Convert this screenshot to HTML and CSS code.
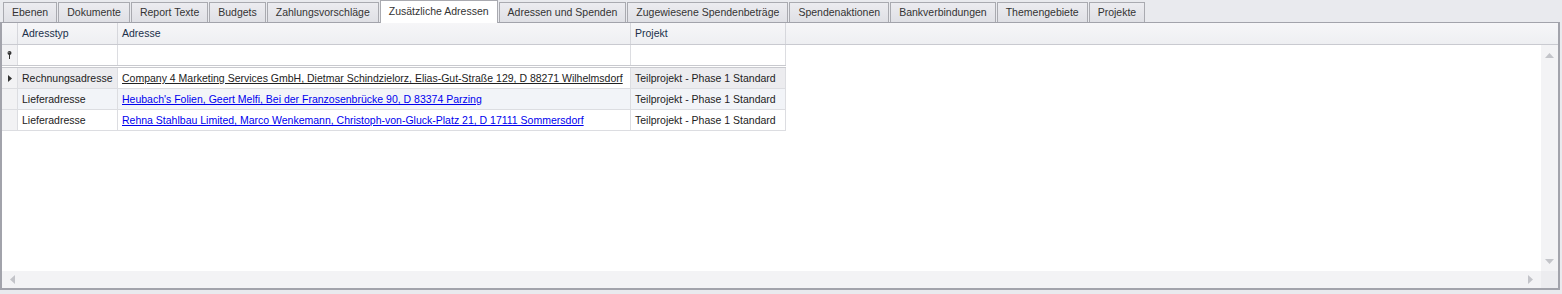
FILE: index.html
```html
<!DOCTYPE html>
<html lang="de">
<head>
<meta charset="utf-8">
<title>Zusätzliche Adressen</title>
<link rel="stylesheet" href="styles.css">
</head>
<body>
<div class="tabs">
  <div class="tab">Ebenen</div>
  <div class="tab">Dokumente</div>
  <div class="tab">Report Texte</div>
  <div class="tab">Budgets</div>
  <div class="tab">Zahlungsvorschläge</div>
  <div class="tab active">Zusätzliche Adressen</div>
  <div class="tab">Adressen und Spenden</div>
  <div class="tab">Zugewiesene Spendenbeträge</div>
  <div class="tab">Spendenaktionen</div>
  <div class="tab">Bankverbindungen</div>
  <div class="tab">Themengebiete</div>
  <div class="tab">Projekte</div>
</div>
<div class="panel">
  <div class="header">
    <div class="hc ind"></div>
    <div class="hc">Adresstyp</div>
    <div class="hc">Adresse</div>
    <div class="hc">Projekt</div>
  </div>
  <div class="body">
    <div class="gridarea">
      <div class="row filter">
        <div class="c ind"><svg width="5" height="8" viewBox="0 0 5 8"><circle cx="2.5" cy="2" r="2" fill="#333"/><rect x="2" y="3" width="1" height="5" fill="#333"/><rect x="1.5" y="1" width="1" height="1" fill="#999"/></svg></div>
        <div class="c"></div>
        <div class="c"></div>
        <div class="c"></div>
      </div>
      <div class="row focused">
        <div class="c ind"><svg width="4" height="7" viewBox="0 0 4 7"><path d="M0 0 L4 3.5 L0 7 Z" fill="#333"/></svg></div>
        <div class="c">Rechnungsadresse</div>
        <div class="c addr"><span class="link dark">Company 4 Marketing Services GmbH, Dietmar Schindzielorz, Elias-Gut-Straße 129, D 88271 Wilhelmsdorf</span></div>
        <div class="c">Teilprojekt - Phase 1 Standard</div>
      </div>
      <div class="row alt">
        <div class="c ind"></div>
        <div class="c">Lieferadresse</div>
        <div class="c"><span class="link">Heubach's Folien, Geert Melfi, Bei der Franzosenbrücke 90, D 83374 Parzing</span></div>
        <div class="c">Teilprojekt - Phase 1 Standard</div>
      </div>
      <div class="row">
        <div class="c ind"></div>
        <div class="c">Lieferadresse</div>
        <div class="c"><span class="link">Rehna Stahlbau Limited, Marco Wenkemann, Christoph-von-Gluck-Platz 21, D 17111 Sommersdorf</span></div>
        <div class="c">Teilprojekt - Phase 1 Standard</div>
      </div>
    </div>
    <div class="vscroll">
      <svg width="9" height="5" viewBox="0 0 9 5"><path d="M4.5 0 L9 5 L0 5 Z" fill="#c3c4c9"/></svg>
      <svg width="9" height="5" viewBox="0 0 9 5"><path d="M0 0 L9 0 L4.5 5 Z" fill="#c3c4c9"/></svg>
    </div>
  </div>
  <div class="hbar">
    <div class="hscroll">
      <svg width="5" height="9" viewBox="0 0 5 9"><path d="M5 0 L5 9 L0 4.5 Z" fill="#c3c4c9"/></svg>
      <svg width="5" height="9" viewBox="0 0 5 9"><path d="M0 0 L5 4.5 L0 9 Z" fill="#c3c4c9"/></svg>
    </div>
    <div class="corner"></div>
  </div>
</div>
</body>
</html>
```
FILE: styles.css
```css
html, body {
  margin: 0;
  padding: 0;
}
body {
  background: #e9eaee;
  font-family: "Liberation Sans", Arial, sans-serif;
  font-size: 10.5px;
  color: #222;
  width: 1562px;
  height: 294px;
  overflow: hidden;
}
.tabs {
  display: flex;
  align-items: flex-end;
  height: 22px;
  padding-left: 3px;
  gap: 1px;
}
.tab {
  box-sizing: border-box;
  height: 20px;
  padding: 0 8px;
  border: 1px solid #a9aab0;
  border-bottom: none;
  background: linear-gradient(#ececf0, #dfe0e5);
  color: #333;
  line-height: 19px;
  white-space: nowrap;
}
.tab.active {
  height: 23px;
  margin-bottom: -1px;
  background: #fff;
  border-color: #a9aab0;
  position: relative;
  z-index: 1;
  line-height: 21px;
  padding-bottom: 2px;
}
.panel {
  box-sizing: border-box;
  width: 1560px;
  height: 268px;
  border: 2px solid #a2a3ab;
  border-top-width: 1px;
  background: #fff;
  display: flex;
  flex-direction: column;
}
.header {
  display: grid;
  grid-template-columns: 16px 100px 513px 155px;
  height: 22px;
  box-sizing: border-box;
  background: linear-gradient(#f6f6f8, #eeeff2);
  border-bottom: 1px solid #c9cad0;
  flex: none;
}
.hc {
  border-right: 1px solid #d6d7dc;
  padding-left: 4px;
  line-height: 21px;
  color: #20304a;
}
.hc.ind {
  padding: 0;
}
.body {
  flex: 1;
  display: flex;
  min-height: 0;
}
.gridarea {
  flex: 1;
}
.row {
  display: grid;
  grid-template-columns: 16px 100px 513px 155px;
  width: 784px;
  height: 21px;
  box-sizing: border-box;
  border-bottom: 1px solid #dcdde1;
}
.row.filter {
  height: 23px;
  border-bottom: 3px double #c8c9ce;
}
.c {
  border-right: 1px solid #dcdde1;
  padding-left: 4px;
  line-height: 20px;
  white-space: nowrap;
  overflow: hidden;
}
.c.ind {
  padding: 0;
  background: #f2f2f4;
  display: flex;
  align-items: center;
  justify-content: center;
}
.row.focused .c {
  background: #ececef;
}
.row.focused .c.addr {
  background: #fff;
}
.row.alt .c {
  background: #f2f4f8;
}
.row .c.ind {
  background: #f2f2f4;
}
.link {
  color: #0000ee;
  text-decoration: underline;
}
.link.dark {
  color: #222;
}
.vscroll {
  width: 17px;
  background: #f3f3f5;
  display: flex;
  flex-direction: column;
  justify-content: space-between;
  align-items: center;
  padding: 8px 0 7px;
  box-sizing: border-box;
  flex: none;
}
.hbar {
  display: flex;
  height: 17px;
  flex: none;
}
.hscroll {
  flex: 1;
  background: #f3f3f5;
  display: flex;
  justify-content: space-between;
  align-items: center;
  padding: 0 8px;
}
.corner {
  width: 17px;
  background: #ececef;
}
```
